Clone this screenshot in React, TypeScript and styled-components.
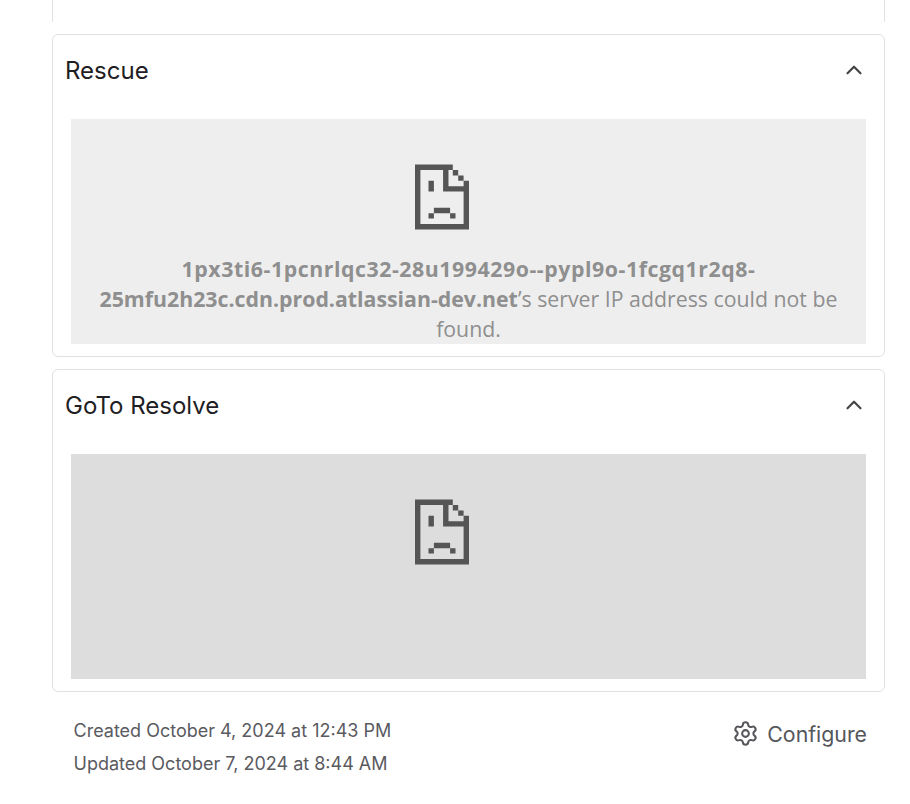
import styled, { createGlobalStyle } from "styled-components";
import { ChevronUp, Settings } from "lucide-react";

const GlobalStyle = createGlobalStyle`
  html, body {
    margin: 0;
    padding: 0;
    background: #fff;
    font-family: Inter, "Liberation Sans", sans-serif;
  }
`;

const Page = styled.main`
  width: 833px;
  height: 804px;
  margin-left: 52px;
  display: flex;
  flex-direction: column;
  gap: 12px;
  overflow: hidden;
`;

const CutCard = styled.div`
  height: 22px;
  flex: none;
  border-left: 1px solid #e1e1e1;
  border-right: 1px solid #e1e1e1;
`;

const Card = styled.section`
  flex: none;
  border: 1px solid #e1e1e1;
  border-radius: 6px;
  padding: 0 18px 12px;
`;

const CardHeader = styled.header`
  height: 70px;
  margin: 0 -1px 14px -6px;
  display: flex;
  align-items: center;
  justify-content: space-between;
  color: #454545;
`;

const CardTitle = styled.h2`
  margin: 0;
  font-size: 24px;
  font-weight: 400;
  color: #1f2023;
`;

const Frame = styled.div<{ $shade: string }>`
  height: 225px;
  padding-top: 45px;
  box-sizing: border-box;
  overflow: hidden;
  display: flex;
  flex-direction: column;
  align-items: center;
  background: ${(props) => props.$shade};
`;

const SadIcon = styled.svg`
  flex: none;
  margin-right: 53px;
  fill: #555;
`;

const ErrorText = styled.p`
  margin: 24px 0 0;
  font-family: "Open Sans", "Noto Sans", sans-serif;
  font-size: 21.3px;
  line-height: 30px;
  text-align: center;
  color: #8f8f8f;

  strong {
    font-weight: 700;
  }
`;

const HostLine = styled.span`
  letter-spacing: 0.55px;
`;

const Footer = styled.footer`
  display: flex;
  justify-content: space-between;
  padding: 10px 18px 0 21.5px;
`;

const Dates = styled.div`
  font-size: 18px;
  line-height: 33px;
  color: #5a5a5f;
`;

const ConfigureButton = styled.button`
  height: 39px;
  padding: 0;
  display: flex;
  align-items: center;
  gap: 8px;
  border: 0;
  background: none;
  font-family: inherit;
  font-size: 21.3px;
  color: #55565b;
`;

function SadFile() {
  return (
    <SadIcon width="54" height="66" viewBox="0 0 10 12" aria-hidden="true">
      <path d="M0 0h7v1H1v10h8V5H5.2V0h1v4H9V3h1v9H0z" />
      <path d="M7 1h1v1H7zM8 2h1v1H8z" />
      <path d="M2.5 3h1v2h-1zM3.5 8h3v1h-3zM2.5 9h1v1h-1zM6.5 9h1v1h-1z" />
    </SadIcon>
  );
}

export default function App() {
  return (
    <Page>
      <GlobalStyle />
      <CutCard />
      <Card>
        <CardHeader>
          <CardTitle>Rescue</CardTitle>
          <ChevronUp size={26} />
        </CardHeader>
        <Frame $shade="#eeeeee">
          <SadFile />
          <ErrorText>
            <strong>
              <HostLine>1px3ti6-1pcnrlqc32-28u199429o--pypl9o-1fcgq1r2q8-</HostLine>
              <br />
              25mfu2h23c.cdn.prod.atlassian-dev.net
            </strong>
            ’s server IP address could not be
            <br />
            found.
          </ErrorText>
        </Frame>
      </Card>
      <Card>
        <CardHeader>
          <CardTitle>GoTo Resolve</CardTitle>
          <ChevronUp size={26} />
        </CardHeader>
        <Frame $shade="#dddddd">
          <SadFile />
        </Frame>
      </Card>
      <Footer>
        <Dates>
          <div>Created October 4, 2024 at 12:43 PM</div>
          <div>Updated October 7, 2024 at 8:44 AM</div>
        </Dates>
        <ConfigureButton>
          <Settings size={27} strokeWidth={1.8} />
          Configure
        </ConfigureButton>
      </Footer>
    </Page>
  );
}
